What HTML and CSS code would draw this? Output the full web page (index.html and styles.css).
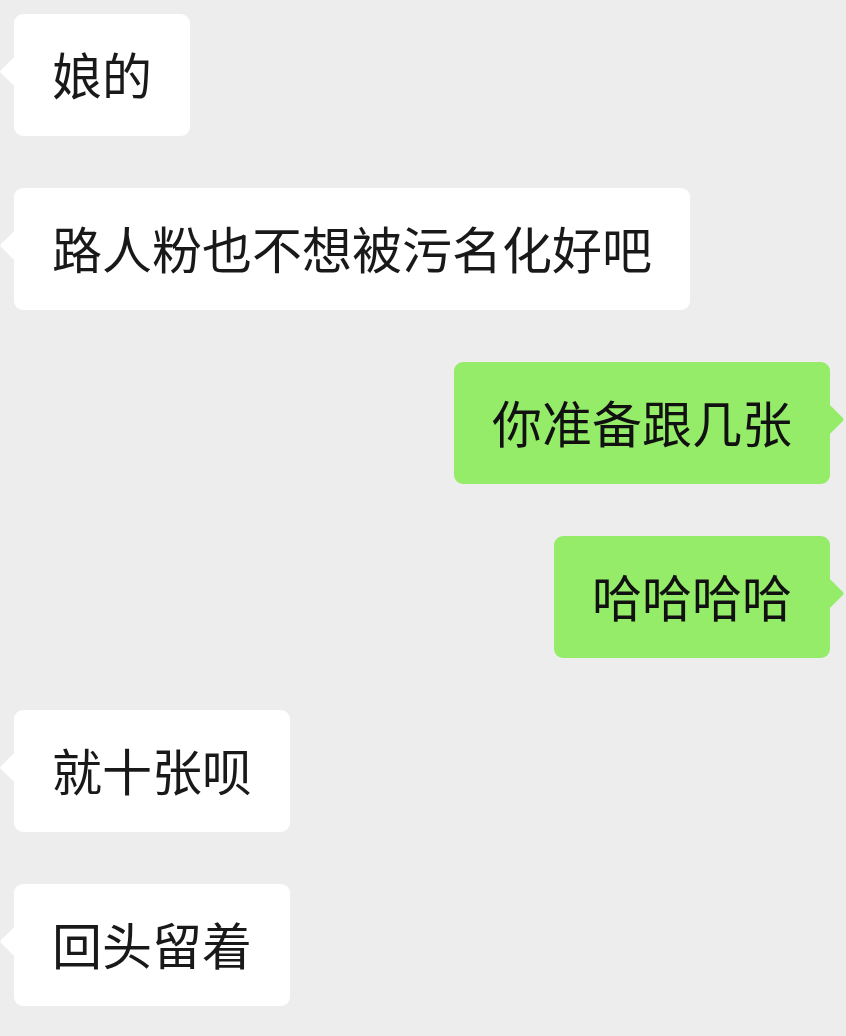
FILE: index.html
```html
<!DOCTYPE html>
<html lang="zh-CN">
<head>
    <meta charset="UTF-8">
    <meta name="viewport" content="width=device-width, initial-scale=1.0">
    <title>聊天</title>
    <link rel="stylesheet" href="styles.css">
</head>
<body>
    <div class="chat">
        <div class="msg left"><div class="bubble">娘的</div></div>
        <div class="msg left"><div class="bubble">路人粉也不想被污名化好吧</div></div>
        <div class="msg right"><div class="bubble">你准备跟几张</div></div>
        <div class="msg right"><div class="bubble">哈哈哈哈</div></div>
        <div class="msg left"><div class="bubble">就十张呗</div></div>
        <div class="msg left"><div class="bubble">回头留着</div></div>
    </div>
</body>
</html>
```

FILE: styles.css
```css
html, body {
    margin: 0;
    background: #ededed;
}
body {
    font-family: "Noto Sans CJK SC", "Noto Sans", sans-serif;
    color: #191919;
}
.chat {
    display: flex;
    flex-direction: column;
    gap: 52px;
    padding: 14px 16px 0 14px;
}
.msg {
    display: flex;
}
.msg.right {
    justify-content: flex-end;
}
.bubble {
    position: relative;
    height: 122px;
    box-sizing: border-box;
    padding: 0 38px 5px;
    display: flex;
    align-items: center;
    font-size: 50px;
    line-height: 1;
    border-radius: 9px;
    background: #fff;
}
.right .bubble {
    background: #95ec69;
    color: #111;
}
/* little arrow at the side */
.bubble::before {
    content: "";
    position: absolute;
    top: 47px;
    width: 21px;
    height: 21px;
    background: inherit;
    border-radius: 2px;
    transform: rotate(45deg);
}
.left .bubble::before {
    left: -10px;
}
.right .bubble::before {
    right: -10px;
}
```
